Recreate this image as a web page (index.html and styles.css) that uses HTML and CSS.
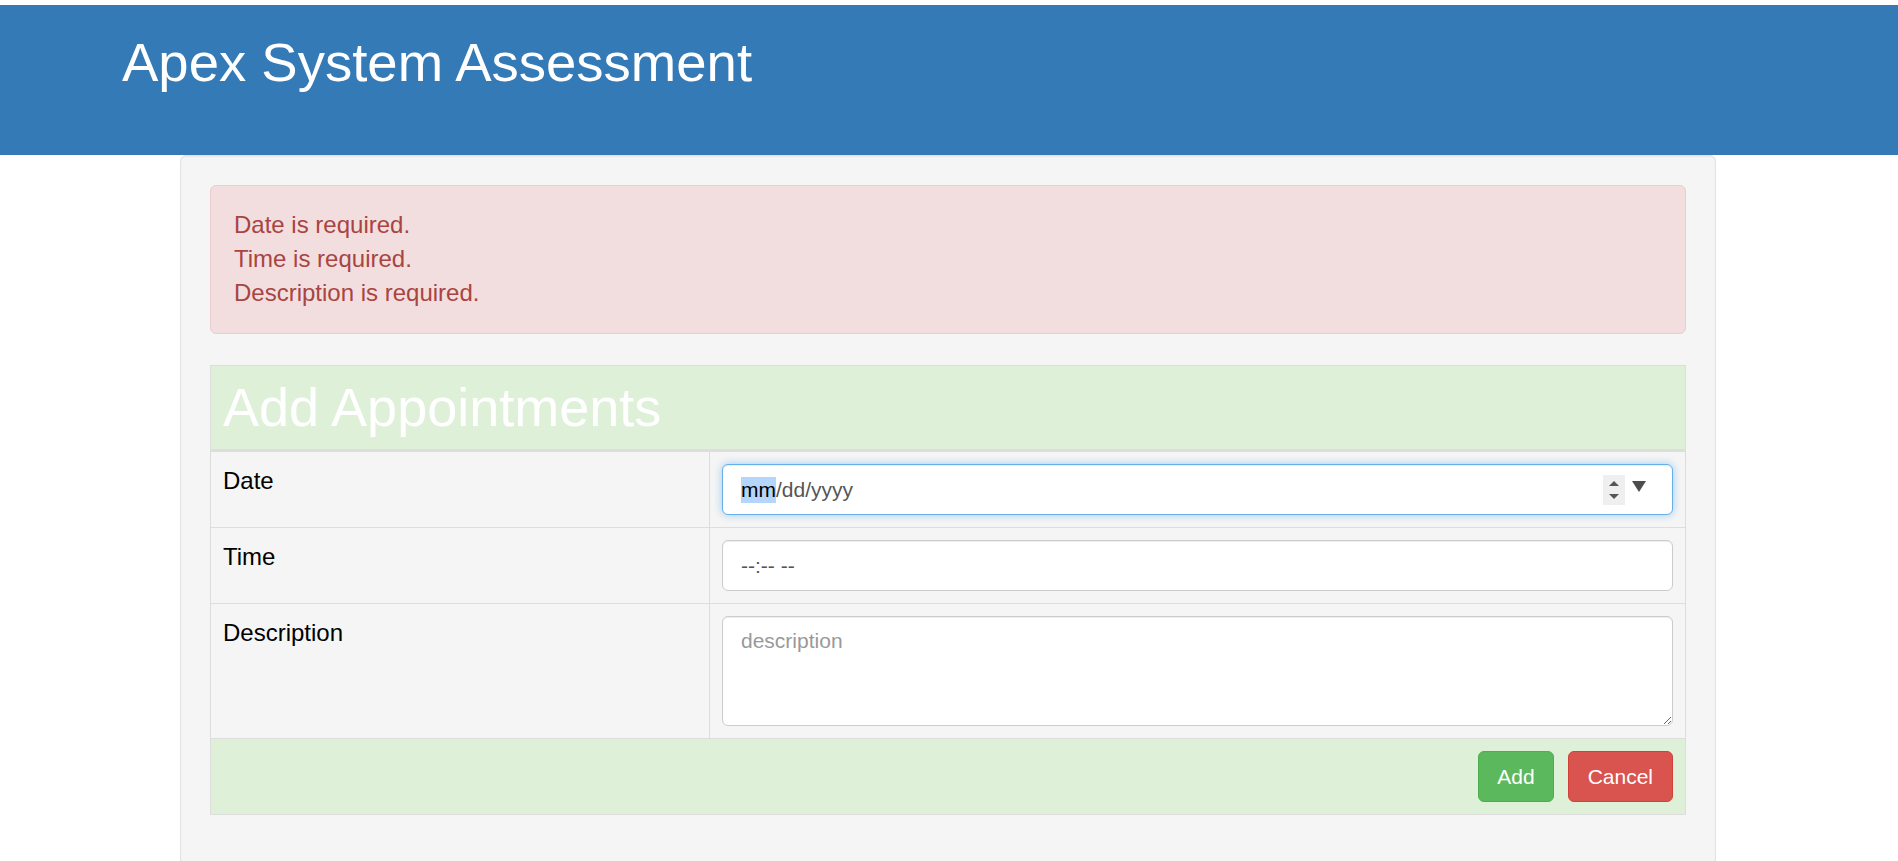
FILE: index.html
```html
<!DOCTYPE html>
<html lang="en">
<head>
<meta charset="utf-8">
<title>Apex System Assessment</title>
<link rel="stylesheet" href="styles.css">
</head>
<body>
<header class="topbar">
  <h1 class="brand">Apex System Assessment</h1>
</header>
<main class="well">
  <div class="alert">
    <div>Date is required.</div>
    <div>Time is required.</div>
    <div>Description is required.</div>
  </div>
  <table class="form-table">
    <colgroup>
      <col class="col-label">
      <col class="col-field">
    </colgroup>
    <thead>
      <tr><th colspan="2" class="head-cell"><h2 class="form-title">Add Appointments</h2></th></tr>
    </thead>
    <tbody>
      <tr>
        <td class="label">Date</td>
        <td class="field">
          <div class="control focused">
            <span class="sel">mm</span><span>/dd/yyyy</span>
            <span class="spacer"></span>
            <span class="spin">
              <svg width="22" height="30" viewBox="0 0 22 30"><path d="M6 11 L11 6 L16 11 Z" fill="#555"/><path d="M6 19 L11 24 L16 19 Z" fill="#555"/></svg>
            </span>
            <svg class="drop" width="14" height="11" viewBox="0 0 14 11"><path d="M0 0 H14 L7 11 Z" fill="#4d4d4d"/></svg>
          </div>
        </td>
      </tr>
      <tr>
        <td class="label">Time</td>
        <td class="field"><div class="control"><span>--:-- --</span></div></td>
      </tr>
      <tr>
        <td class="label">Description</td>
        <td class="field"><textarea class="control area" placeholder="description"></textarea></td>
      </tr>
      <tr class="foot">
        <td colspan="2" class="foot-cell">
          <div class="actions">
            <button class="btn btn-add" type="button">Add</button>
            <button class="btn btn-cancel" type="button">Cancel</button>
          </div>
        </td>
      </tr>
    </tbody>
  </table>
</main>
</body>
</html>
```

FILE: styles.css
```css
* { box-sizing: border-box; }
html, body { margin: 0; padding: 0; background: #fff; }
body {
  font-family: "Liberation Sans", Arial, Helvetica, sans-serif;
  font-size: 24px;
  line-height: 1.42857;
  color: #333;
  overflow: hidden;
  padding-right: 2px;
}
.topbar {
  margin-top: 5px;
  margin-right: -2px;
  height: 150px;
  background: #337ab7;
  padding: 28px 0 0 122px;
}
.brand {
  margin: 0;
  font-size: 54.5px;
  font-weight: 400;
  line-height: 1.1;
  color: #fff;
}
.well {
  width: 1536px;
  margin: 0 auto;
  background: #f5f5f5;
  border: 1px solid #e3e3e3;
  border-radius: 6px;
  box-shadow: inset 0 1px 1px rgba(0,0,0,.05);
  padding: 29px 29px 29px;
}
.alert {
  background: #f2dede;
  border: 1px solid #ebccd1;
  border-radius: 6px;
  color: #a94442;
  padding: 22px 23px 23px;
  margin-bottom: 31px;
  line-height: 34px;
}
.form-table {
  width: 100%;
  border-collapse: collapse;
  table-layout: fixed;
  margin-bottom: 30px;
}
.col-label { width: 499px; }
.form-table th, .form-table td {
  border: 1px solid #ddd;
  padding: 12px;
  vertical-align: top;
  text-align: left;
}
.head-cell {
  background: #dff0d8;
  border-bottom: 3px solid #ddd !important;
}
.form-title {
  margin: 0;
  font-size: 54px;
  font-weight: 400;
  line-height: 1.1;
  color: #fff;
}
.label {
  color: #000;
  line-height: 34px;
}
.control {
  display: flex;
  align-items: center;
  width: 100%;
  height: 51px;
  padding: 9px 18px;
  font-family: "Liberation Sans", Arial, Helvetica, sans-serif;
  font-size: 21px;
  line-height: 30px;
  color: #555;
  background: #fff;
  border: 1px solid #ccc;
  border-radius: 6px;
  box-shadow: inset 0 1px 1px rgba(0,0,0,.075);
}
.focused {
  border-color: #66afe9;
  box-shadow: inset 0 1px 1px rgba(0,0,0,.075), 0 0 8px rgba(102,175,233,.6);
  padding-right: 26px;
}
.sel {
  background: #b4d5fc;
  color: #000;
  line-height: 26px;
}
.spacer { flex: 1; }
.spin {
  display: block;
  width: 22px;
  height: 30px;
  background: #efefef;
  margin-right: 7px;
}
.spin svg { display: block; }
.drop { display: block; margin-top: -6px; }
.area {
  display: block;
  height: 110px;
  resize: vertical;
  padding: 9px 18px;
}
.area::placeholder { color: #999; }
.foot-cell { background: #dff0d8; }
.actions {
  display: flex;
  justify-content: flex-end;
  gap: 14px;
}
.btn {
  font-family: "Liberation Sans", Arial, Helvetica, sans-serif;
  font-size: 21px;
  line-height: 30px;
  height: 51px;
  padding: 9px 18px;
  border-radius: 6px;
  border: 1px solid transparent;
  color: #fff;
}
.btn-cancel { padding: 9px 19px; }
.btn-add { background: #5cb85c; border-color: #4cae4c; }
.btn-cancel { background: #d9534f; border-color: #d43f3a; }
```
